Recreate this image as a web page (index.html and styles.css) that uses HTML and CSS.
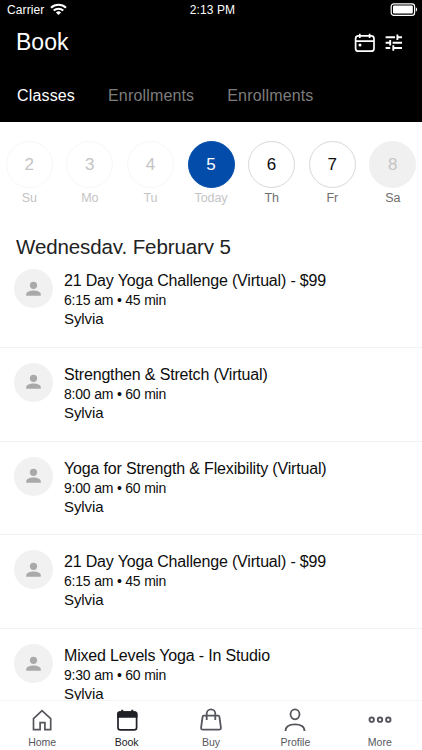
FILE: index.html
```html
<!DOCTYPE html>
<html lang="en">
<head>
  <meta charset="UTF-8">
  <meta name="viewport" content="width=device-width, initial-scale=1">
  <title>Book</title>
  <link rel="stylesheet" href="styles.css">
</head>
<body>

  <header class="header">
    <div class="status">
      <div class="carrier">
        <span>Carrier</span>
        <svg width="17" height="13" viewBox="0 0 17 13" fill="none" stroke="#fff" stroke-width="2">
          <path d="M1 4.8a10.8 10.8 0 0 1 15 0"/>
          <path d="M3.7 7.6a7 7 0 0 1 9.6 0"/>
          <path d="M8.5 12L5.9 9.4a3.8 3.8 0 0 1 5.2 0z" fill="#fff" stroke="none"/>
        </svg>
      </div>
      <span class="clock">2:13 PM</span>
      <svg class="battery" width="28" height="13" viewBox="0 0 28 13">
        <rect x="1.2" y=".8" width="23.4" height="11.6" rx="2.6" fill="none" stroke="#fff" stroke-width="1.2"/>
        <rect x="3" y="2.6" width="19.8" height="8" rx="1" fill="#fff"/>
        <path d="M25.9 4.3c1.6.7 1.6 3.7 0 4.4z" fill="#fff"/>
      </svg>
    </div>

    <div class="title-bar">
      <h1>Book</h1>
      <div class="actions">
        <svg width="22" height="20" viewBox="0 0 22 20" fill="none" stroke="#fff" stroke-width="1.7">
          <rect x="1.6" y="2.9" width="18.4" height="15.3" rx="2.8"/>
          <path d="M1.6 8.1h18.4M5.8 .7v4.4M15.6 .7v4.4"/>
          <circle cx="6" cy="12" r="1.5" fill="#fff" stroke="none"/>
        </svg>
        <svg width="18" height="18" viewBox="0 0 18 18" fill="none" stroke="#fff" stroke-width="1.9">
          <path d="M.6 3.2h9.4M12.4 .4v5.6M12.4 3.2H17M.6 8.700h4.600M5.200 5.900v5.600M7.600 8.700H17M.6 14h4.600M8.300 11.200v5.600M8.300 14H17"/>
        </svg>
      </div>
    </div>

    <nav class="tabs">
      <a class="tab active">Classes</a>
      <a class="tab">Enrollments</a>
      <a class="tab">Enrollments</a>
    </nav>
  </header>

  <section class="week">
    <div class="day past"><span class="num">2</span><span class="name">Su</span></div>
    <div class="day past"><span class="num">3</span><span class="name">Mo</span></div>
    <div class="day past"><span class="num">4</span><span class="name">Tu</span></div>
    <div class="day today"><span class="num">5</span><span class="name">Today</span></div>
    <div class="day"><span class="num">6</span><span class="name">Th</span></div>
    <div class="day"><span class="num">7</span><span class="name">Fr</span></div>
    <div class="day closed"><span class="num">8</span><span class="name">Sa</span></div>
  </section>

  <h2 class="date">Wednesday, February 5</h2>

  <svg class="symbols" width="0" height="0">
    <symbol id="person" viewBox="0 0 16 16">
      <circle cx="7.500" cy="4.300" r="3.600"/>
      <path d="M.2 14.700v-1.300C.2 10.800 4.300 9.600 7.500 9.600s7.300 1.200 7.300 3.800v1.300z"/>
    </symbol>
  </svg>

  <main class="classes">
    <article class="class">
      <div class="avatar"><svg width="16" height="16"><use href="#person"/></svg></div>
      <div class="info">
        <h3>21 Day Yoga Challenge (Virtual) - $99</h3>
        <p class="time">6:15 am • 45 min</p>
        <p class="teacher">Sylvia</p>
      </div>
    </article>
    <article class="class">
      <div class="avatar"><svg width="16" height="16"><use href="#person"/></svg></div>
      <div class="info">
        <h3>Strengthen &amp; Stretch (Virtual)</h3>
        <p class="time">8:00 am • 60 min</p>
        <p class="teacher">Sylvia</p>
      </div>
    </article>
    <article class="class">
      <div class="avatar"><svg width="16" height="16"><use href="#person"/></svg></div>
      <div class="info">
        <h3>Yoga for Strength &amp; Flexibility (Virtual)</h3>
        <p class="time">9:00 am • 60 min</p>
        <p class="teacher">Sylvia</p>
      </div>
    </article>
    <article class="class">
      <div class="avatar"><svg width="16" height="16"><use href="#person"/></svg></div>
      <div class="info">
        <h3>21 Day Yoga Challenge (Virtual) - $99</h3>
        <p class="time">6:15 am • 45 min</p>
        <p class="teacher">Sylvia</p>
      </div>
    </article>
    <article class="class">
      <div class="avatar"><svg width="16" height="16"><use href="#person"/></svg></div>
      <div class="info">
        <h3>Mixed Levels Yoga - In Studio</h3>
        <p class="time">9:30 am • 60 min</p>
        <p class="teacher">Sylvia</p>
      </div>
    </article>
  </main>

  <nav class="bottom-nav">
    <a class="item">
      <svg width="24" height="24" viewBox="0 0 24 24" fill="none" stroke="#55565c" stroke-width="1.700">
        <path d="M3.500 10.700L12 2.700l8.700 8v10.900h-5.800v-6.900h-4.800v6.900H3.500z"/>
      </svg>
      <span>Home</span>
    </a>
    <a class="item active">
      <svg width="24" height="24" viewBox="0 0 24 24" fill="none" stroke="#202126" stroke-width="1.700">
        <rect x="3" y="4" width="18.600" height="17.800" rx="2.400"/>
        <path d="M3 8.900V6q0-2 2-2h14.600q2 0 2 2v2.900z" fill="#202126"/>
        <path d="M7.200 1.800v4M17.300 1.800v4" stroke-width="2"/>
      </svg>
      <span>Book</span>
    </a>
    <a class="item">
      <svg width="24" height="24" viewBox="0 0 24 24" fill="none" stroke="#55565c" stroke-width="1.800" stroke-linejoin="round">
        <path d="M4.800 7.700h14.400q1.100 0 1.200 1l1.500 10.900q.2 2.100-1.900 2.100H4q-2.100 0-1.900-2.100L3.600 8.700q.1-1 1.200-1z"/>
        <path d="M7.700 12V5.600a4.300 4.300 0 0 1 8.600 0V12"/>
      </svg>
      <span>Buy</span>
    </a>
    <a class="item">
      <svg width="24" height="24" viewBox="0 0 24 24" fill="none" stroke="#55565c" stroke-width="1.800">
        <ellipse cx="12" cy="6.300" rx="4.500" ry="5"/>
        <path d="M2.500 23c0-4.500 3.500-6.700 9.500-6.700s9.500 2.200 9.500 6.700"/>
      </svg>
      <span>Profile</span>
    </a>
    <a class="item">
      <svg width="24" height="24" viewBox="0 0 24 24" fill="none" stroke="#55565c" stroke-width="1.900">
        <circle cx="3.700" cy="11.700" r="2.200"/>
        <circle cx="12" cy="11.700" r="2.200"/>
        <circle cx="20.300" cy="11.700" r="2.200"/>
      </svg>
      <span>More</span>
    </a>
  </nav>

</body>
</html>
```
FILE: styles.css
```css
* {
  box-sizing: border-box;
}

body {
  margin: 0;
  height: 750px;
  display: flex;
  flex-direction: column;
  overflow: hidden;
  font-family: "Liberation Sans", Arial, sans-serif;
  background: #fff;
  color: #0d0d0d;
}

h1, h2, h3, p {
  margin: 0;
  font-weight: normal;
}

svg {
  display: block;
  flex: none;
}

.header {
  flex: none;
  height: 122px;
  background: #000;
  color: #fff;
}

.status {
  display: grid;
  grid-template-columns: 1fr auto 1fr;
  align-items: center;
  height: 19px;
  padding: 0 4px 0 7px;
  font-size: 12px;
  letter-spacing: 0.1px;
}

.carrier {
  display: flex;
  align-items: center;
  gap: 6px;
}

.battery {
  justify-self: end;
}

.title-bar {
  display: flex;
  justify-content: space-between;
  align-items: center;
  height: 47px;
  padding: 0 19px 0 16px;
}

h1 {
  font-size: 23px;
}

.actions {
  display: flex;
  align-items: center;
  gap: 9px;
}

.tabs {
  display: flex;
  gap: 33px;
  padding: 21px 17px 0;
  font-size: 16px;
  line-height: 18px;
  letter-spacing: 0.16px;
}

.tab {
  color: #7d7d7d;
}

.tab.active {
  color: #fff;
}

.week {
  flex: none;
  display: grid;
  grid-template-columns: repeat(7, 60.6px);
  justify-content: center;
  padding-top: 19px;
  height: 112px;
}

.day {
  display: flex;
  flex-direction: column;
  align-items: center;
}

.num {
  width: 47px;
  height: 47px;
  line-height: 45px;
  border: 1px solid #d8d8d8;
  border-radius: 50%;
  text-align: center;
  font-size: 17px;
}

.name {
  margin-top: 3px;
  font-size: 12.5px;
  line-height: 15px;
  letter-spacing: -0.1px;
  color: #6f6f6f;
}

.past .num {
  border-color: #f7f7f7;
  color: #c4c4c4;
}

.past .name,
.today .name {
  color: #c4c4c4;
}

.today .num {
  background: #034ca9;
  border-color: #034ca9;
  color: #fff;
}

.closed .num {
  background: #f0f0f0;
  border-color: #f0f0f0;
  color: #c4c4c4;
}

/* the list scrolls over the bottom edge of the date */
.date {
  flex: none;
  height: 20px;
  padding-left: 16px;
  font-size: 20.5px;
  line-height: 25px;
  letter-spacing: -0.1px;
  color: #222;
  overflow: hidden;
}

.symbols {
  position: absolute;
}

.classes {
  flex: 1;
  min-height: 0;
  overflow: hidden;
}

.class {
  display: flex;
  gap: 11px;
  height: 93.75px;
  padding: 15px 14px 0;
  border-bottom: 1px solid #f2f2f2;
}

.avatar {
  display: flex;
  align-items: center;
  justify-content: center;
  width: 39px;
  height: 39px;
  border-radius: 50%;
  background: #f1f1f1;
}

.avatar svg {
  fill: #a9a9a9;
}

h3 {
  margin-top: 2px;
  font-size: 16px;
  line-height: 19px;
  letter-spacing: -0.17px;
}

.time {
  font-size: 14px;
  line-height: 20px;
  letter-spacing: -0.2px;
}

.teacher {
  font-size: 15px;
  line-height: 18px;
  letter-spacing: -0.1px;
}

.bottom-nav {
  flex: none;
  display: grid;
  grid-template-columns: repeat(5, 1fr);
  height: 50px;
  padding-top: 7px;
  border-top: 1px solid #f4f4f4;
  background: #fff;
}

.item {
  display: flex;
  flex-direction: column;
  align-items: center;
  gap: 4px;
  font-size: 10.5px;
  line-height: 12px;
  color: #55565c;
}

.item.active {
  color: #202126;
}
```
